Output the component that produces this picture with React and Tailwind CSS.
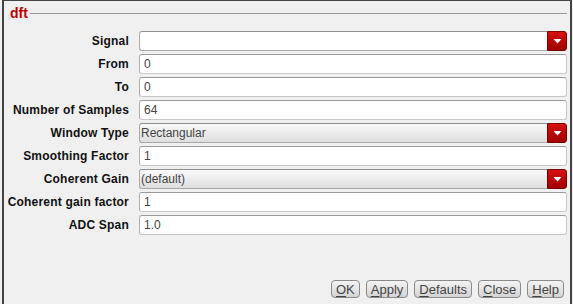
import React from "react";

const rows = [
  { label: "Signal", value: "", type: "select-white" },
  { label: "From", value: "0", type: "input" },
  { label: "To", value: "0", type: "input" },
  { label: "Number of Samples", value: "64", type: "input" },
  { label: "Window Type", value: "Rectangular", type: "select" },
  { label: "Smoothing Factor", value: "1", type: "input" },
  { label: "Coherent Gain", value: "(default)", type: "select" },
  { label: "Coherent gain factor", value: "1", type: "input" },
  { label: "ADC Span", value: "1.0", type: "input" },
];

function Arrow() {
  return (
    <div className="w-[20px] h-[20px] rounded-r-[3px] bg-gradient-to-b from-[#d81010] to-[#a00000] border border-[#7a0000] flex items-center justify-center">
      <svg width="9" height="6" viewBox="0 0 9 6">
        <polygon points="0.5,1 8.5,1 4.5,5.5" fill="#ffffff" />
      </svg>
    </div>
  );
}

function Field({ row }) {
  if (row.type === "input") {
    return (
      <div className="flex-1 h-[20px] bg-white rounded-[3px] border border-[#c8c8c8] border-t-[#9a9a9a] border-l-[#b0b0b0] flex items-center pl-[4px] text-[12px] text-[#444]">
        {row.value}
      </div>
    );
  }
  const bg =
    row.type === "select-white"
      ? "bg-white"
      : "bg-gradient-to-b from-[#fafafa] to-[#dedede]";
  return (
    <div className="flex-1 h-[20px] flex">
      <div
        className={`flex-1 h-[20px] ${bg} rounded-l-[3px] border border-r-0 border-[#a8a8a8] border-t-[#909090] flex items-center pl-[1px] text-[12px] text-[#444]`}
      >
        {row.value}
      </div>
      <Arrow />
    </div>
  );
}

function Btn({ u, rest }) {
  return (
    <button className="h-[18px] px-[4px] rounded-[4px] border border-[#8a8a8a] bg-gradient-to-b from-[#f4f4f4] to-[#d4d4d4] text-[13px] text-[#444] leading-none flex items-center">
      <span className="underline underline-offset-2">{u}</span>
      {rest}
    </button>
  );
}

export default function App() {
  return (
    <div
      className="w-[573px] h-[304px] bg-[#f0f0f0] overflow-hidden"
      style={{ fontFamily: '"Liberation Sans", Arial, sans-serif' }}
    >
      <div className="ml-[2px] w-[570px] h-[320px] border-l-2 border-r-2 border-t border-[#444] flex flex-col">
        <div className="flex items-center h-[24px] pl-[6px] pr-[3px]">
          <span className="text-[14px] font-bold text-[#c00000] leading-none mr-[2px]">dft</span>
          <div className="flex-1 h-[2px] border-t border-[#999] bg-transparent mt-[1px]" />
        </div>
        <div className="flex flex-col gap-[3px] pt-[6px] pr-[3px]">
          {rows.map((r) => (
            <div key={r.label} className="flex items-center h-[20px]">
              <div className="w-[125px] text-right text-[12px] font-bold text-[#111] tracking-[0.2px] whitespace-nowrap">
                {r.label}
              </div>
              <div className="w-[10px]" />
              <Field row={r} />
            </div>
          ))}
        </div>
        <div className="flex justify-end gap-[6px] pr-[6px] mt-[45px]">
          <Btn u="O" rest="K" />
          <Btn u="A" rest="pply" />
          <Btn u="D" rest="efaults" />
          <Btn u="C" rest="lose" />
          <Btn u="H" rest="elp" />
        </div>
      </div>
    </div>
  );
}
